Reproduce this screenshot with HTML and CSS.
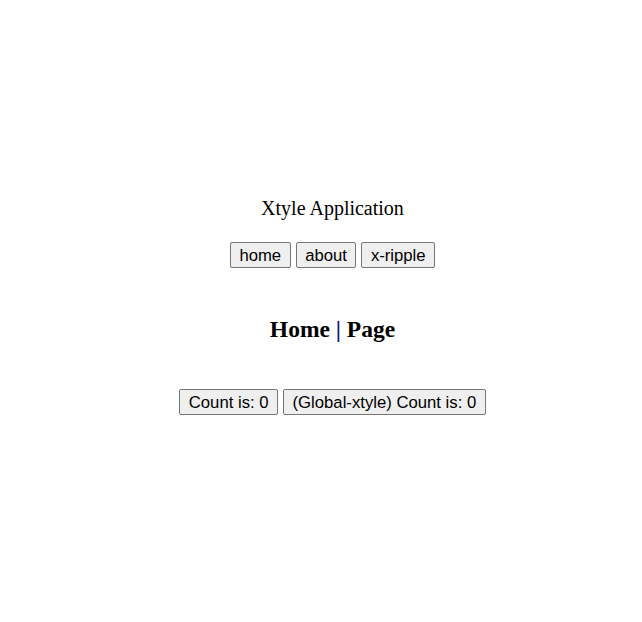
FILE: index.html
```html
<!DOCTYPE html>
<html>
<head>
<meta charset="utf-8">
<link rel="stylesheet" href="styles.css">
</head>
<body>
<div class="app">
  <div class="title">Xtyle Application</div>
  <nav class="nav">
    <button class="btn">home</button>
    <button class="btn">about</button>
    <button class="btn">x-ripple</button>
  </nav>
  <h2 class="heading">Home <span class="sep">|</span> Page</h2>
  <div class="counters">
    <button class="btn">Count is: 0</button>
    <button class="btn">(Global-xtyle) Count is: 0</button>
  </div>
</div>
</body>
</html>
```
FILE: styles.css
```css
html, body {
  margin: 0;
  padding: 0;
  background: #fff;
}
body {
  width: 642px;
  height: 622px;
  font-family: "Liberation Serif", "Times New Roman", serif;
}
.app {
  display: flex;
  flex-direction: column;
  align-items: center;
  padding: 197px 0 0 23px;
}
.title {
  font-size: 20px;
  line-height: 23px;
  color: #000;
}
.nav {
  display: flex;
  gap: 5px;
  margin-top: 22px;
}
.btn {
  font-family: "Liberation Sans", Arial, sans-serif;
  font-size: 16.7px;
  line-height: 20px;
  padding: 3px 8.5px 1px;
  border: 1px solid #767676;
  border-radius: 2px;
  background: #efefef;
  color: #000;
  margin: 0;
}
.heading {
  font-size: 23.5px;
  font-weight: bold;
  margin: 47px 0 0;
  line-height: 28px;
}
.sep {
  color: #0b1a6e;
}
.counters {
  display: flex;
  gap: 5px;
  margin-top: 46px;
}
```
